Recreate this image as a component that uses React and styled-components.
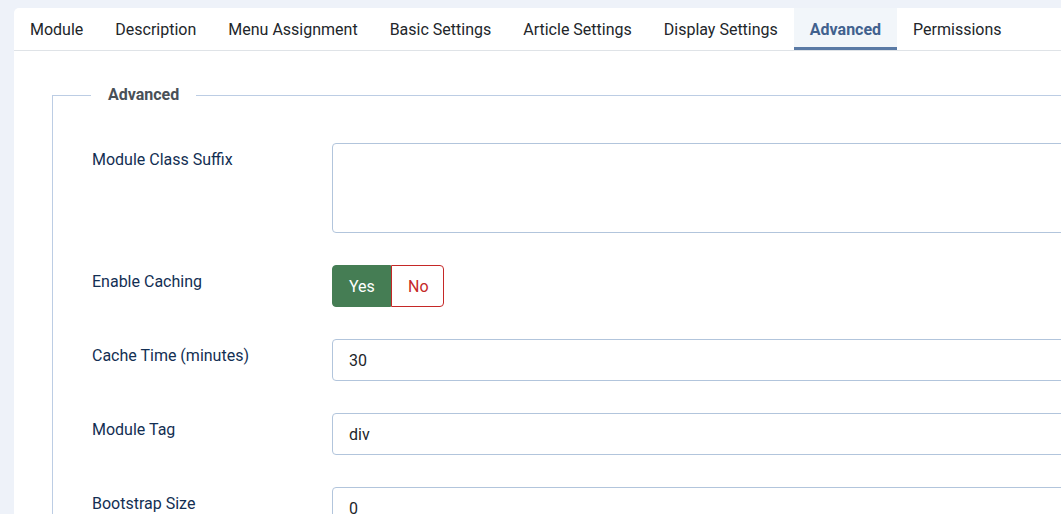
import React from 'react';
import styled, { createGlobalStyle } from 'styled-components';

const GlobalStyle = createGlobalStyle`
  html, body {
    margin: 0;
    padding: 0;
    background: #eef2f9;
    overflow: hidden;
  }
  body {
    font-family: Roboto, "Liberation Sans", Arial, sans-serif;
    font-size: 16px;
  }
  * {
    box-sizing: border-box;
  }
`;

const Page = styled.div`
  padding: 8px 0 0 14px;
  height: 514px;
`;

const Card = styled.div`
  width: 1200px;
  min-height: 600px;
  background: #ffffff;
  border-top-left-radius: 5px;
`;

const TabList = styled.div`
  display: flex;
  border-bottom: 1px solid #dfe3e7;
`;

const Tab = styled.button`
  border: 0;
  background: ${(p) => (p.$active ? '#f2f6fa' : 'transparent')};
  box-shadow: ${(p) => (p.$active ? 'inset 0 -3px 0 #5a7aa5' : 'none')};
  padding: 0 16px;
  height: 42px;
  font-family: inherit;
  font-size: 16px;
  font-weight: ${(p) => (p.$active ? 700 : 400)};
  color: ${(p) => (p.$active ? '#41618e' : '#22262a')};
  cursor: pointer;
`;

const Content = styled.div`
  padding: 32px 0 0 38px;
`;

const Fieldset = styled.fieldset`
  margin: 0;
  padding: 36px 39px 40px;
  border: 1px solid #bccde4;
  border-right: 0;
`;

const Legend = styled.legend`
  margin-left: -1px;
  padding: 0 17px;
  font-size: 16px;
  line-height: 24px;
  font-weight: 700;
  color: #495057;
`;

const Row = styled.div`
  display: flex;
  align-items: flex-start;
  margin-bottom: 32px;
`;

const Label = styled.label`
  width: 240px;
  flex: none;
  padding-top: 5px;
  line-height: 24px;
  font-size: 16px;
  color: #132f53;
`;

const Input = styled.input`
  width: 800px;
  height: 42px;
  padding: 0 16px;
  border: 1px solid #b2c5dc;
  border-radius: 4px;
  font-family: inherit;
  font-size: 16px;
  color: #22262a;
  background: #fff;
  outline: none;
`;

const TextArea = styled.textarea`
  width: 800px;
  height: 90px;
  padding: 8px 16px;
  border: 1px solid #b2c5dc;
  border-radius: 4px;
  font-family: inherit;
  font-size: 16px;
  resize: none;
  outline: none;
`;

const Switcher = styled.div`
  display: flex;
`;

const SwitchOption = styled.button`
  height: 42px;
  padding: 0 16px;
  font-family: inherit;
  font-size: 16px;
  cursor: pointer;
  border: 1px solid ${(p) => (p.$yes ? '#457d54' : '#c52827')};
  background: ${(p) => (p.$yes ? '#457d54' : '#ffffff')};
  color: ${(p) => (p.$yes ? '#ffffff' : '#c52827')};
  border-radius: ${(p) => (p.$yes ? '4px 0 0 4px' : '0 4px 4px 0')};
  width: ${(p) => (p.$yes ? '59px' : '53px')};
`;

const tabs = [
  'Module',
  'Description',
  'Menu Assignment',
  'Basic Settings',
  'Article Settings',
  'Display Settings',
  'Advanced',
  'Permissions',
];

export default function App() {
  return (
    <>
      <GlobalStyle />
      <Page>
        <Card>
          <TabList>
            {tabs.map((t) => (
              <Tab key={t} $active={t === 'Advanced'}>
                {t}
              </Tab>
            ))}
          </TabList>
          <Content>
            <Fieldset>
              <Legend>Advanced</Legend>
              <Row>
                <Label>Module Class Suffix</Label>
                <TextArea />
              </Row>
              <Row>
                <Label>Enable Caching</Label>
                <Switcher>
                  <SwitchOption $yes>Yes</SwitchOption>
                  <SwitchOption>No</SwitchOption>
                </Switcher>
              </Row>
              <Row>
                <Label>Cache Time (minutes)</Label>
                <Input defaultValue="30" />
              </Row>
              <Row>
                <Label>Module Tag</Label>
                <Input defaultValue="div" />
              </Row>
              <Row>
                <Label>Bootstrap Size</Label>
                <Input defaultValue="0" />
              </Row>
            </Fieldset>
          </Content>
        </Card>
      </Page>
    </>
  );
}
